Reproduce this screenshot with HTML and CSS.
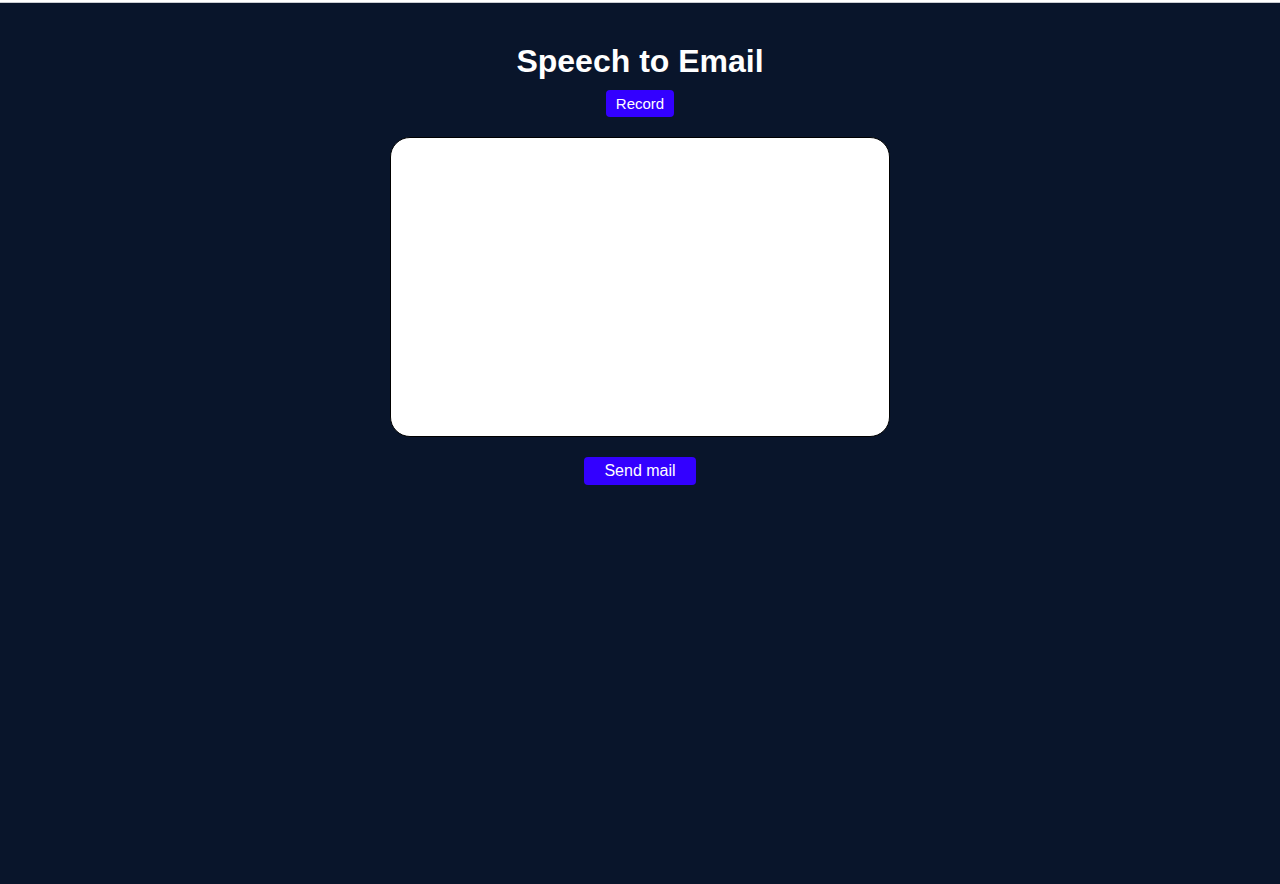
FILE: index.html
```html
<!DOCTYPE html>
<html lang="en">
<head>
<meta charset="utf-8">
<title>Speech to Email</title>
<link rel="stylesheet" href="styles.css">
</head>
<body>
<main class="app">
  <h1 class="title">Speech to Email</h1>
  <button class="btn btn-record" type="button">Record</button>
  <textarea class="message"></textarea>
  <button class="btn btn-send" type="button">Send mail</button>
</main>
</body>
</html>
```
FILE: styles.css
```css
html {
  background: #ffffff;
}
body {
  margin: 0;
  min-height: 884px;
  box-sizing: border-box;
  border-top: 2px solid #ffffff;
  background: #09152b;
  font-family: "Liberation Sans", Arial, sans-serif;
  box-shadow: inset 0 1px 0 #c9ccd2;
}
.app {
  display: flex;
  flex-direction: column;
  align-items: center;
  padding-top: 1px;
}
.title {
  margin: 40px 0 0;
  font-size: 32px;
  line-height: 37px;
  font-weight: 700;
  color: #ffffff;
}
.btn {
  font-family: "Liberation Sans", Arial, sans-serif;
  color: #ffffff;
  background: #3300ff;
  border: none;
  border-radius: 4px;
  cursor: pointer;
}
.btn-record {
  margin-top: 10px;
  height: 27px;
  padding: 0 10px;
  font-size: 15px;
}
.message {
  margin-top: 20px;
  width: 500px;
  height: 300px;
  box-sizing: border-box;
  border: 1px solid #000000;
  border-radius: 20px;
  background: #ffffff;
  resize: none;
  display: block;
}
.btn-send {
  margin-top: 20px;
  width: 112px;
  height: 28px;
  padding: 0;
  font-size: 16px;
}
```
